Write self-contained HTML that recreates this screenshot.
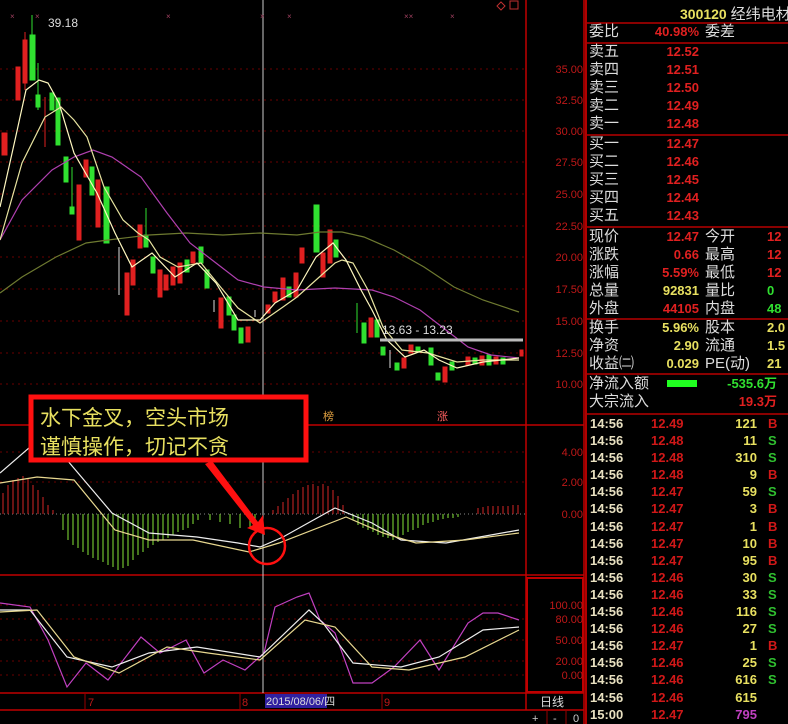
<!DOCTYPE html>
<html><head><meta charset="utf-8"><style>
body{margin:0;background:#000;width:788px;height:724px;overflow:hidden;position:relative;font-family:"Liberation Sans","Noto Sans CJK SC",sans-serif}
.r{position:absolute;left:585px;top:0;width:203px;height:724px;border-left:2px solid #b00000;box-sizing:border-box}
.t{position:absolute;white-space:nowrap}
.l{color:#ddd;font-size:15px;left:2px;line-height:18px}
.n{font-weight:bold;font-size:13px;line-height:18px;text-align:right}
.hl{position:absolute;left:0;width:203px;height:2px;background:#8a0000}
</style></head><body>
<svg width="585" height="724" style="position:absolute;left:0;top:0">
<g stroke="#6a0000" stroke-dasharray="2,4" stroke-width="1">
<line x1="0" x2="526" y1="69" y2="69"/><line x1="0" x2="526" y1="100" y2="100"/><line x1="0" x2="526" y1="131" y2="131"/><line x1="0" x2="526" y1="162" y2="162"/><line x1="0" x2="526" y1="194" y2="194"/><line x1="0" x2="526" y1="226" y2="226"/><line x1="0" x2="526" y1="257" y2="257"/><line x1="0" x2="526" y1="289" y2="289"/><line x1="0" x2="526" y1="321" y2="321"/><line x1="0" x2="526" y1="353" y2="353"/><line x1="0" x2="526" y1="384" y2="384"/>
<line x1="0" x2="526" y1="452" y2="452"/><line x1="0" x2="526" y1="482" y2="482"/>
<line x1="0" x2="526" y1="605" y2="605"/><line x1="0" x2="526" y1="619" y2="619"/><line x1="0" x2="526" y1="640" y2="640"/><line x1="0" x2="526" y1="661" y2="661"/><line x1="0" x2="526" y1="675" y2="675"/>
</g>
<line x1="0" x2="526" y1="514" y2="514" stroke="#888" stroke-dasharray="1,3"/>
<g stroke="#c00000" stroke-width="1.5" fill="none">
<line x1="526" y1="0" x2="526" y2="710"/><line x1="584" y1="0" x2="584" y2="724"/>
<line x1="0" y1="425" x2="584" y2="425"/><line x1="0" y1="575" x2="584" y2="575"/>
<line x1="0" y1="693" x2="584" y2="693"/><line x1="0" y1="710" x2="584" y2="710"/>
<rect x="527" y="578" width="56" height="114" stroke-width="2"/>
</g>
<line x1="263" y1="0" x2="263" y2="693" stroke="#ccc" stroke-width="1"/>
<!-- candles -->
<g stroke-width="1">
<g fill="#e02020" stroke="#e02020">
<rect x="2" y="133" width="5" height="22"/><rect x="16" y="67" width="4" height="33"/><line x1="25" y1="32" x2="25" y2="90"/><rect x="23" y="40" width="4" height="43"/>
<line x1="45" y1="97" x2="45" y2="147"/><rect x="77" y="185" width="4" height="55"/><rect x="84" y="160" width="4" height="17"/><rect x="96" y="180" width="4" height="47"/>
<rect x="125" y="273" width="4" height="42"/><rect x="131" y="260" width="4" height="25"/><rect x="138" y="225" width="4" height="23"/>
<rect x="158" y="270" width="4" height="27"/><rect x="164" y="275" width="4" height="15"/><rect x="171" y="267" width="4" height="18"/><rect x="178" y="263" width="4" height="20"/><rect x="191" y="252" width="4" height="11"/>
<rect x="219" y="298" width="4" height="30"/><rect x="246" y="327" width="4" height="15"/><rect x="266" y="305" width="4" height="8"/><rect x="273" y="292" width="4" height="10"/><rect x="281" y="278" width="4" height="22"/><rect x="294" y="273" width="4" height="24"/><rect x="300" y="248" width="4" height="15"/>
<rect x="321" y="253" width="4" height="24"/><rect x="328" y="230" width="4" height="33"/><rect x="369" y="318" width="4" height="19"/><rect x="402" y="358" width="4" height="10"/><rect x="409" y="345" width="4" height="8"/><rect x="443" y="367" width="4" height="15"/>
<rect x="466" y="357" width="4" height="8"/><rect x="480" y="356" width="4" height="9"/><rect x="494" y="357" width="4" height="7"/><rect x="520" y="350" width="3" height="6"/>
</g>
<g fill="#30e030" stroke="#30e030">
<line x1="32" y1="15" x2="32" y2="80"/><rect x="30" y="35" width="5" height="45"/><line x1="38" y1="63" x2="38" y2="110"/><rect x="36" y="95" width="4" height="12"/>
<rect x="50" y="93" width="4" height="17"/><rect x="56" y="98" width="4" height="47"/><rect x="64" y="157" width="4" height="25"/><line x1="72" y1="167" x2="72" y2="213"/><rect x="70" y="207" width="4" height="7"/>
<rect x="90" y="167" width="4" height="28"/><rect x="104" y="187" width="5" height="56"/><line x1="146" y1="208" x2="146" y2="247"/><rect x="144" y="235" width="4" height="12"/><rect x="151" y="257" width="4" height="16"/>
<rect x="185" y="260" width="4" height="12"/><rect x="199" y="247" width="4" height="16"/><rect x="205" y="270" width="4" height="18"/><rect x="227" y="297" width="4" height="18"/><rect x="232" y="315" width="4" height="15"/><rect x="239" y="328" width="4" height="15"/>
<rect x="287" y="287" width="4" height="10"/><rect x="314" y="205" width="5" height="47"/><rect x="334" y="240" width="4" height="17"/><line x1="357" y1="303" x2="357" y2="333"/><rect x="362" y="323" width="4" height="20"/><rect x="375" y="320" width="4" height="17"/>
<rect x="381" y="347" width="4" height="8"/><rect x="395" y="363" width="4" height="7"/><rect x="416" y="347" width="4" height="5"/><rect x="429" y="348" width="4" height="17"/><rect x="436" y="373" width="4" height="7"/><rect x="450" y="362" width="4" height="8"/>
<rect x="473" y="358" width="4" height="6"/><rect x="487" y="355" width="4" height="10"/><rect x="501" y="358" width="4" height="6"/>
</g>
<g stroke="#ddd"><line x1="119" y1="247" x2="119" y2="295"/><line x1="214" y1="300" x2="214" y2="312"/><line x1="255" y1="310" x2="255" y2="317"/><line x1="390" y1="350" x2="390" y2="368"/></g>
</g>
<!-- MAs -->
<g fill="none" stroke-width="1.2">
<polyline stroke="#6e7a30" points="0,293 22,277 56,257 86,243 108,240 149,235 186,233 223,235 260,233 297,235 320,232 342,232 364,237 394,250 424,267 454,287 483,300 519,312"/>
<polyline stroke="#b040b0" points="0,240 22,200 52,170 74,157 93,150 112,157 141,177 167,213 190,243 216,263 238,280 264,287 297,290 335,288 372,290 394,297 420,310 446,330 468,347 491,355 519,358"/>
<polyline stroke="#e8e4a0" points="0,240 22,163 45,117 61,107 74,120 87,137 104,187 123,220 138,233 149,240 160,257 178,267 201,263 223,290 238,308 260,323 283,307 297,297 316,280 335,263 342,260 353,263 368,290 383,327 402,350 428,353 457,362 483,360 519,360"/>
<polyline stroke="#fff8c0" points="0,207 15,140 26,90 39,80 48,83 59,103 74,153 97,193 115,233 132,267 152,253 175,277 197,263 216,283 238,320 260,320 275,303 297,290 316,257 333,243 346,260 361,290 372,310 387,340 405,357 424,350 439,360 457,368 483,362 519,358"/>
</g>
<line x1="380" y1="340" x2="523" y2="340" stroke="#bbb" stroke-width="3"/>
<text x="382" y="334" fill="#ddd" font-size="12" font-family="Liberation Sans">13.63 - 13.23</text>
<text x="48" y="27" fill="#ddd" font-size="12" font-family="Liberation Sans">39.18</text>
<g fill="#a04060" font-size="8"><text x="10" y="19">×</text><text x="35" y="19">×</text><text x="166" y="19">×</text><text x="260" y="19">×</text><text x="287" y="19">×</text><text x="404" y="19">××</text><text x="450" y="19">×</text></g>
<g stroke="#c03030" fill="none"><path d="M501 2 L505 6 L501 10 L497 6Z"/><rect x="510" y="1" width="8" height="8"/></g>
<text x="323" y="420" fill="#e0a040" font-size="11">榜</text><text x="437" y="420" fill="#ff6060" font-size="11">涨</text>
<!-- axis labels -->
<g fill="#c01818" font-size="11" font-family="Liberation Sans" text-anchor="end">
<text x="583" y="73">35.00</text><text x="583" y="104">32.50</text><text x="583" y="135">30.00</text><text x="583" y="166">27.50</text><text x="583" y="198">25.00</text><text x="583" y="230">22.50</text><text x="583" y="261">20.00</text><text x="583" y="293">17.50</text><text x="583" y="325">15.00</text><text x="583" y="357">12.50</text><text x="583" y="388">10.00</text>
<text x="583" y="456">4.00</text><text x="583" y="486">2.00</text><text x="583" y="518">0.00</text>
<text x="583" y="609">100.00</text><text x="583" y="623">80.00</text><text x="583" y="644">50.00</text><text x="583" y="665">20.00</text><text x="583" y="679">0.00</text>
</g>
<!-- MACD bars -->
<g stroke="#b02020" stroke-width="1.2">
<line x1="3" y1="514" x2="3" y2="493"/><line x1="8" y1="514" x2="8" y2="485"/><line x1="13" y1="514" x2="13" y2="480"/><line x1="18" y1="514" x2="18" y2="478"/><line x1="23" y1="514" x2="23" y2="476"/><line x1="28" y1="514" x2="28" y2="478"/><line x1="33" y1="514" x2="33" y2="485"/><line x1="38" y1="514" x2="38" y2="490"/><line x1="43" y1="514" x2="43" y2="497"/><line x1="48" y1="514" x2="48" y2="505"/><line x1="53" y1="514" x2="53" y2="510"/>
<line x1="273" y1="514" x2="273" y2="510"/><line x1="278" y1="514" x2="278" y2="506"/><line x1="283" y1="514" x2="283" y2="502"/><line x1="288" y1="514" x2="288" y2="498"/><line x1="293" y1="514" x2="293" y2="494"/><line x1="298" y1="514" x2="298" y2="490"/><line x1="303" y1="514" x2="303" y2="487"/><line x1="308" y1="514" x2="308" y2="485"/><line x1="313" y1="514" x2="313" y2="484"/><line x1="318" y1="514" x2="318" y2="486"/><line x1="323" y1="514" x2="323" y2="484"/><line x1="328" y1="514" x2="328" y2="486"/><line x1="333" y1="514" x2="333" y2="490"/><line x1="338" y1="514" x2="338" y2="496"/><line x1="343" y1="514" x2="343" y2="505"/>
<line x1="478" y1="514" x2="478" y2="508"/><line x1="483" y1="514" x2="483" y2="507"/><line x1="488" y1="514" x2="488" y2="506"/><line x1="493" y1="514" x2="493" y2="506"/><line x1="498" y1="514" x2="498" y2="506"/><line x1="503" y1="514" x2="503" y2="506"/><line x1="508" y1="514" x2="508" y2="506"/><line x1="513" y1="514" x2="513" y2="505"/><line x1="518" y1="514" x2="518" y2="505"/>
</g>
<g stroke="#70c030" stroke-width="1.2">
<line x1="63" y1="514" x2="63" y2="530"/><line x1="68" y1="514" x2="68" y2="540"/><line x1="73" y1="514" x2="73" y2="545"/><line x1="78" y1="514" x2="78" y2="548"/><line x1="83" y1="514" x2="83" y2="552"/><line x1="88" y1="514" x2="88" y2="555"/><line x1="93" y1="514" x2="93" y2="558"/><line x1="98" y1="514" x2="98" y2="560"/><line x1="103" y1="514" x2="103" y2="562"/><line x1="108" y1="514" x2="108" y2="565"/><line x1="113" y1="514" x2="113" y2="567"/><line x1="118" y1="514" x2="118" y2="570"/><line x1="123" y1="514" x2="123" y2="568"/><line x1="128" y1="514" x2="128" y2="566"/><line x1="133" y1="514" x2="133" y2="560"/><line x1="138" y1="514" x2="138" y2="555"/><line x1="143" y1="514" x2="143" y2="552"/><line x1="148" y1="514" x2="148" y2="548"/><line x1="153" y1="514" x2="153" y2="545"/><line x1="158" y1="514" x2="158" y2="542"/><line x1="163" y1="514" x2="163" y2="540"/><line x1="168" y1="514" x2="168" y2="538"/><line x1="173" y1="514" x2="173" y2="535"/><line x1="178" y1="514" x2="178" y2="532"/><line x1="183" y1="514" x2="183" y2="530"/><line x1="188" y1="514" x2="188" y2="528"/><line x1="193" y1="514" x2="193" y2="524"/><line x1="198" y1="514" x2="198" y2="520"/><line x1="210" y1="514" x2="210" y2="520"/><line x1="220" y1="514" x2="220" y2="522"/><line x1="230" y1="514" x2="230" y2="524"/><line x1="240" y1="514" x2="240" y2="528"/><line x1="250" y1="514" x2="250" y2="528"/><line x1="255" y1="514" x2="255" y2="524"/>
<line x1="353" y1="514" x2="353" y2="520"/><line x1="358" y1="514" x2="358" y2="525"/><line x1="363" y1="514" x2="363" y2="528"/><line x1="368" y1="514" x2="368" y2="530"/><line x1="373" y1="514" x2="373" y2="532"/><line x1="378" y1="514" x2="378" y2="535"/><line x1="383" y1="514" x2="383" y2="537"/><line x1="388" y1="514" x2="388" y2="538"/><line x1="393" y1="514" x2="393" y2="540"/><line x1="398" y1="514" x2="398" y2="538"/><line x1="403" y1="514" x2="403" y2="535"/><line x1="408" y1="514" x2="408" y2="532"/><line x1="413" y1="514" x2="413" y2="530"/><line x1="418" y1="514" x2="418" y2="528"/><line x1="423" y1="514" x2="423" y2="525"/><line x1="428" y1="514" x2="428" y2="523"/><line x1="433" y1="514" x2="433" y2="522"/><line x1="438" y1="514" x2="438" y2="520"/><line x1="443" y1="514" x2="443" y2="519"/><line x1="448" y1="514" x2="448" y2="518"/><line x1="453" y1="514" x2="453" y2="518"/><line x1="458" y1="514" x2="458" y2="517"/>
</g>
<g fill="none" stroke-width="1.2">
<polyline stroke="#eee" points="0,473 30,447 67,460 112,513 149,533 197,537 238,543 260,547 283,537 335,508 372,523 401,540 446,543 519,530"/>
<polyline stroke="#e8d890" points="0,483 37,477 74,480 115,530 149,540 193,540 249,552 279,543 346,517 383,533 416,543 465,540 519,533"/>
</g>
<!-- KDJ -->
<g fill="none" stroke-width="1.2">
<polyline stroke="#c040c0" points="0,603 30,607 48,640 67,687 86,663 108,680 141,637 160,653 186,640 204,673 223,660 245,670 264,653 275,607 297,597 309,593 320,620 335,633 353,683 372,683 394,667 420,640 439,670 468,623 483,613 498,613 519,620"/>
<polyline stroke="#eee" points="0,610 30,610 67,657 112,667 149,653 197,647 260,657 309,610 323,623 353,663 401,667 439,657 483,630 519,627"/>
<polyline stroke="#e8d890" points="0,612 37,610 74,657 119,673 167,647 208,653 260,660 305,620 335,627 372,667 409,670 465,657 519,630"/>
</g>
<!-- annotation -->
<rect x="31" y="397" width="275" height="63" fill="#000" stroke="#ff1010" stroke-width="5"/>
<text x="40" y="425" fill="#e8e060" font-size="21" font-family="Noto Sans CJK SC,sans-serif">水下金叉，空头市场</text>
<text x="40" y="454" fill="#e8e060" font-size="21" font-family="Noto Sans CJK SC,sans-serif">谨慎操作，切记不贪</text>
<polygon points="205,464 212,461 258,522 263,515 265,535 247,528 253,525" fill="#ff1010"/>
<circle cx="267" cy="546" r="18" fill="none" stroke="#ff1010" stroke-width="2.5"/>
<!-- bottom -->
<g fill="#c01818" font-size="11"><text x="88" y="706">7</text><text x="242" y="706">8</text><text x="384" y="706">9</text></g>
<line x1="85" y1="694" x2="85" y2="709" stroke="#900"/><line x1="240" y1="694" x2="240" y2="709" stroke="#900"/><line x1="382" y1="694" x2="382" y2="709" stroke="#900"/>
<rect x="265" y="694" width="62" height="14" fill="#3020a0"/>
<text x="266" y="705" fill="#ddd" font-size="11" font-family="Liberation Sans,Noto Sans CJK SC,sans-serif">2015/08/06/四</text>
<text x="540" y="706" fill="#ddd" font-size="12" font-family="Noto Sans CJK SC,sans-serif">日线</text>
<g fill="#ccc" font-size="11"><text x="532" y="722">+</text><text x="553" y="722">-</text><text x="573" y="722">0</text></g>
<g stroke="#900"><line x1="547" y1="711" x2="547" y2="724"/><line x1="566" y1="711" x2="566" y2="724"/></g>
</svg>
<div class="r">
<div class="t" style="left:93px;top:3px;color:#e8e060;font-weight:bold;font-size:14px">300120 <span style="color:#ddd;font-weight:normal;font-size:15px">经纬电材</span></div>
<div class="hl" style="top:22px"></div>
<div class="t l" style="top:23px">委比</div><div class="t n" style="top:23px;left:50px;width:62px;color:#e02020">40.98%</div><div class="t l" style="top:23px;left:118px">委差</div>
<div class="hl" style="top:42px"></div>
<div class="t l" style="top:43px">卖五<br>卖四<br>卖三<br>卖二<br>卖一</div>
<div class="t n" style="top:43px;left:50px;width:62px;color:#e02020">12.52<br>12.51<br>12.50<br>12.49<br>12.48</div>
<div class="hl" style="top:134px"></div>
<div class="t l" style="top:135px">买一<br>买二<br>买三<br>买四<br>买五</div>
<div class="t n" style="top:135px;left:50px;width:62px;color:#e02020">12.47<br>12.46<br>12.45<br>12.44<br>12.43</div>
<div class="hl" style="top:226px"></div>
<div class="t l" style="top:228px">现价<br>涨跌<br>涨幅<br>总量<br>外盘</div>
<div class="t n" style="top:228px;left:40px;width:72px;color:#e02020">12.47<br>0.66<br>5.59%<br><span style="color:#e8e060">92831</span><br>44105</div>
<div class="t l" style="top:228px;left:118px">今开<br>最高<br>最低<br>量比<br>内盘</div>
<div class="t n" style="top:228px;left:180px;text-align:left;color:#e02020">12<br>12<br>12<br><span style="color:#30e030">0</span><br><span style="color:#30e030">48</span></div>
<div class="hl" style="top:318px"></div>
<div class="t l" style="top:319px">换手<br>净资<br>收益㈡</div>
<div class="t n" style="top:319px;left:40px;width:72px;color:#e8e060">5.96%<br>2.90<br>0.029</div>
<div class="t l" style="top:319px;left:118px">股本<br>流通<br>PE(动)</div>
<div class="t n" style="top:319px;left:180px;text-align:left;color:#e8e060">2.0<br>1.5<br>21</div>
<div class="hl" style="top:373px"></div>
<div class="t l" style="top:375px">净流入额<br>大宗流入</div>
<div style="position:absolute;left:80px;top:380px;width:30px;height:7px;background:#20ff20"></div>
<div class="t n" style="top:375px;left:110px;width:80px;color:#30e030">-535.6万<br><span style="color:#e02020">19.3万</span></div>
<div class="hl" style="top:413px"></div>
<div class="t" style="top:415px;left:3px;color:#e8e0c0;font-weight:bold;font-size:13px;line-height:17.1px">14:56<br>14:56<br>14:56<br>14:56<br>14:56<br>14:56<br>14:56<br>14:56<br>14:56<br>14:56<br>14:56<br>14:56<br>14:56<br>14:56<br>14:56<br>14:56<br>14:56<br>15:00</div>
<div class="t" style="top:415px;left:64px;color:#d01818;font-weight:bold;font-size:13px;line-height:17.1px">12.49<br>12.48<br>12.48<br>12.48<br>12.47<br>12.47<br>12.47<br>12.47<br>12.47<br>12.46<br>12.46<br>12.46<br>12.46<br>12.47<br>12.46<br>12.46<br>12.46<br>12.47</div>
<div class="t" style="top:415px;left:130px;width:40px;text-align:right;color:#e8e060;font-weight:bold;font-size:13px;line-height:17.1px">121<br>11<br>310<br>9<br>59<br>3<br>1<br>10<br>95<br>30<br>33<br>116<br>27<br>1<br>25<br>616<br>615<br><span style="color:#c040c0">795</span></div>
<div class="t" style="top:415px;left:181px;font-weight:bold;font-size:13px;line-height:17.1px"><span style="color:#d01818">B</span><br><span style="color:#30c030">S</span><br><span style="color:#30c030">S</span><br><span style="color:#d01818">B</span><br><span style="color:#30c030">S</span><br><span style="color:#d01818">B</span><br><span style="color:#d01818">B</span><br><span style="color:#d01818">B</span><br><span style="color:#d01818">B</span><br><span style="color:#30c030">S</span><br><span style="color:#30c030">S</span><br><span style="color:#30c030">S</span><br><span style="color:#30c030">S</span><br><span style="color:#d01818">B</span><br><span style="color:#30c030">S</span><br><span style="color:#30c030">S</span></div>
</div>
</body></html>
